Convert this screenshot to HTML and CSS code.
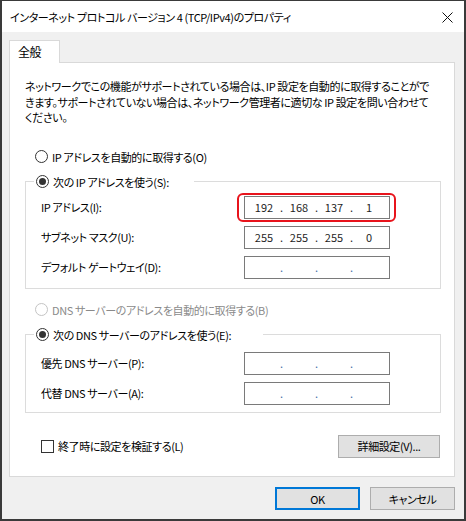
FILE: index.html
```html
<!DOCTYPE html>
<html lang="ja">
<head>
<meta charset="utf-8">
<link rel="stylesheet" href="styles.css">
</head>
<body>
<div class="window">
  <div class="titlebar">
    <span class="title">インターネット プロトコル バージョン 4 (TCP/IPv4)のプロパティ</span>
    <svg class="close" width="11" height="11" viewBox="0 0 11 11"><path d="M0.5 0.5 L10.5 10.5 M10.5 0.5 L0.5 10.5" stroke="#111" stroke-width="1" fill="none"/></svg>
  </div>
  <div class="client">
    <div class="tabs"><div class="tab">全般</div></div>
    <div class="panel">
      <p class="desc">ネットワークでこの機能がサポートされている場合は、IP 設定を自動的に取得することがで<br>きます。サポートされていない場合は、ネットワーク管理者に適切な IP 設定を問い合わせて<br>ください。</p>
      <div class="radio auto-ip"><span class="rb"></span><span>IP アドレスを自動的に取得する(O)</span></div>
      <fieldset class="group group-ip">
        <legend class="radio legend-ip"><span class="rb checked"></span><span>次の IP アドレスを使う(S):</span></legend>
        <div class="row"><span class="lbl">IP アドレス(I):</span>
          <div class="ip highlight"><span class="oct">192</span><span class="dot">.</span><span class="oct">168</span><span class="dot">.</span><span class="oct">137</span><span class="dot">.</span><span class="oct">1</span></div></div>
        <div class="row"><span class="lbl">サブネット マスク(U):</span>
          <div class="ip"><span class="oct">255</span><span class="dot">.</span><span class="oct">255</span><span class="dot">.</span><span class="oct">255</span><span class="dot">.</span><span class="oct">0</span></div></div>
        <div class="row"><span class="lbl">デフォルト ゲートウェイ(D):</span>
          <div class="ip empty"><span class="oct"></span><span class="dot">.</span><span class="oct"></span><span class="dot">.</span><span class="oct"></span><span class="dot">.</span><span class="oct"></span></div></div>
      </fieldset>
      <div class="radio disabled dns-auto"><span class="rb"></span><span>DNS サーバーのアドレスを自動的に取得する(B)</span></div>
      <fieldset class="group group-dns">
        <legend class="radio legend-dns"><span class="rb checked"></span><span>次の DNS サーバーのアドレスを使う(E):</span></legend>
        <div class="row"><span class="lbl">優先 DNS サーバー(P):</span>
          <div class="ip empty"><span class="oct"></span><span class="dot">.</span><span class="oct"></span><span class="dot">.</span><span class="oct"></span><span class="dot">.</span><span class="oct"></span></div></div>
        <div class="row"><span class="lbl">代替 DNS サーバー(A):</span>
          <div class="ip empty"><span class="oct"></span><span class="dot">.</span><span class="oct"></span><span class="dot">.</span><span class="oct"></span><span class="dot">.</span><span class="oct"></span></div></div>
      </fieldset>
      <div class="bottom-row">
        <div class="check"><span class="cb"></span><span>終了時に設定を検証する(L)</span></div>
        <button class="btn adv">詳細設定(V)...</button>
      </div>
    </div>
    <div class="footer">
      <button class="btn ok">OK</button>
      <button class="btn">キャンセル</button>
    </div>
  </div>
</div>
</body>
</html>
```
FILE: styles.css
```css
* { box-sizing: border-box; }
html, body { margin: 0; padding: 0; }
body {
  width: 466px;
  height: 521px;
  background: #2b2b2b;
  font-family: "Noto Sans CJK JP", "Noto Sans", sans-serif;
  font-size: 11px;
  letter-spacing: -0.4px;
  font-feature-settings: "palt";
  color: #000;
  overflow: hidden;
}
.window {
  width: 466px;
  height: 521px;
  border: 2px solid #3a3a3a;
  border-top-width: 1px;
  background: #f0f0f0;
  display: flex;
  flex-direction: column;
}
.titlebar {
  height: 31px;
  background: #fff;
  display: flex;
  align-items: center;
  justify-content: space-between;
  padding: 0 11px 0 8px;
}
.title { line-height: 16px; }
.close { width: 11px; height: 11px; margin-top: 2px; }
.client {
  flex: 1;
  padding: 8px 9px 0 7px;
  display: flex;
  flex-direction: column;
}
.tabs { display: flex; height: 22px; position: relative; z-index: 1; }
.tab {
  width: 51px;
  height: 23px;
  background: #fff;
  border: 1px solid #d9d9d9;
  border-bottom: none;
  padding-left: 8px;
  line-height: 22px;
  font-size: 12px;
}
.panel {
  background: #fff;
  border: 1px solid #d9d9d9;
  height: 415px;
  padding: 16px 13px 0 15px;
  display: flex;
  flex-direction: column;
}
.desc {
  margin: 0;
  line-height: 15.5px;
}
.radio {
  display: flex;
  align-items: center;
  height: 16px;
  line-height: 16px;
  white-space: nowrap;
}
.auto-ip { margin: 23px 0 0 10px; }
.rb {
  width: 13px;
  height: 13px;
  border: 1px solid #333;
  border-radius: 50%;
  background: #fff;
  margin-right: 4px;
  position: relative;
  flex: none;
}
.rb.checked::after {
  content: "";
  position: absolute;
  left: 2px; top: 2px;
  width: 7px; height: 7px;
  border-radius: 50%;
  background: #333;
}
.disabled { color: #8a8a8a; }
.disabled .rb { border-color: #c4c4c4; }
.group {
  margin: 9px 0 0 0;
  padding: 0 0 9px 15px;
  border: 1px solid #dcdcdc;
  min-width: 0;
}
.group legend {
  margin-left: -7px;
  padding: 0 0 0 2px;
}
.legend-ip { width: 160px; }
.legend-dns { width: 229px; }
.group-ip .row:first-of-type { margin-top: 6px; }
.group-dns { padding-bottom: 7px; }
.group-dns .row:first-of-type { margin-top: 9px; }
.row {
  display: flex;
  align-items: center;
  height: 23px;
  margin-top: 7px;
}
.lbl { width: 203px; }
.ip {
  width: 146px;
  height: 23px;
  border: 1px solid #7a7a7a;
  background: #fff;
  display: flex;
  align-items: center;
  padding-left: 5px;
  color: #1e1e1e;
  position: relative;
  letter-spacing: 0;
}
.oct { width: 28px; text-align: center; }
.dot { width: 7px; text-align: center; }
.empty .dot { color: #3f6fa8; }
.highlight::after {
  content: "";
  position: absolute;
  left: -8px; right: -7px;
  top: -4px; bottom: -4px;
  border: 2px solid #e8141c;
  border-radius: 6px;
}
.dns-auto { margin: 13px 0 0 10px; }
.bottom-row {
  margin-top: 22px;
  display: flex;
  align-items: center;
  justify-content: space-between;
  padding: 0 1px 0 16px;
}
.check { display: flex; align-items: center; }
.cb {
  width: 13px; height: 13px;
  border: 1px solid #333;
  background: #fff;
  margin-right: 4px;
}
.btn {
  font: inherit;
  letter-spacing: inherit;
  font-feature-settings: "palt";
  color: #000;
  background: #e1e1e1;
  border: 1px solid #adadad;
  height: 23px;
  padding: 0;
}
.adv { width: 102px; }
.footer {
  display: flex;
  justify-content: flex-end;
  gap: 10px;
  margin-top: 10px;
}
.footer .btn { width: 85px; }
.ok { border-color: #0078d7; box-shadow: inset 0 0 0 1px #0078d7; }
```
